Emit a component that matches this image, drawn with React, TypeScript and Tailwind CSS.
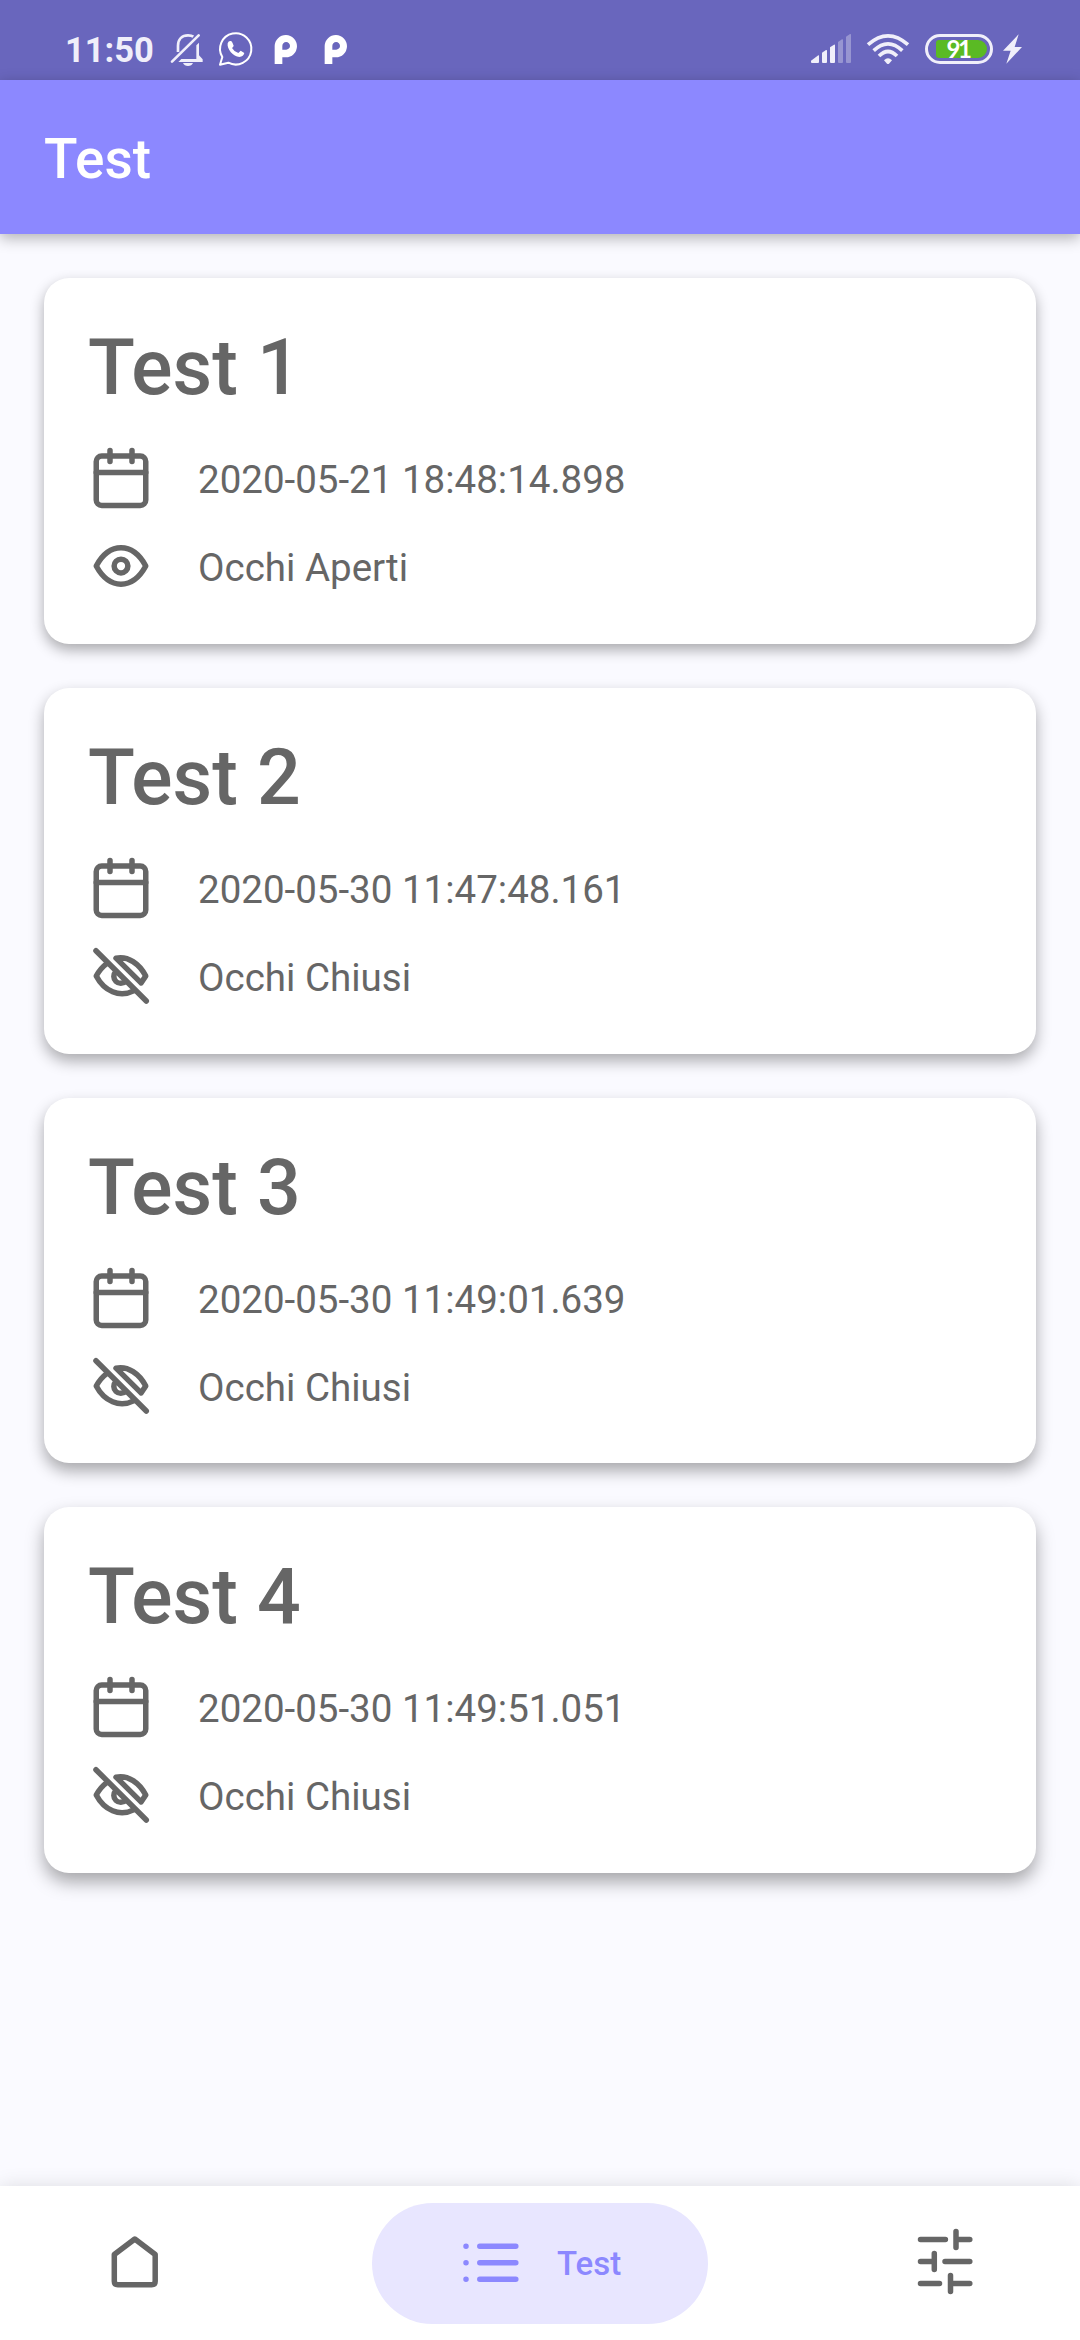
import type { ReactNode } from "react";

type TestEntry = { title: string; date: string; open: boolean; shadow: string };

const entries: TestEntry[] = [
  {
    title: "Test 1",
    date: "2020-05-21 18:48:14.898",
    open: true,
    shadow: "shadow-[0_6px_14px_rgba(0,0,0,0.32)]",
  },
  {
    title: "Test 2",
    date: "2020-05-30 11:47:48.161",
    open: false,
    shadow: "shadow-[0_7px_15px_rgba(0,0,0,0.32)]",
  },
  {
    title: "Test 3",
    date: "2020-05-30 11:49:01.639",
    open: false,
    shadow: "shadow-[0_8px_16px_rgba(0,0,0,0.33)]",
  },
  {
    title: "Test 4",
    date: "2020-05-30 11:49:51.051",
    open: false,
    shadow: "shadow-[0_9px_18px_rgba(0,0,0,0.34)]",
  },
];

function Icon({ children }: { children: ReactNode }) {
  return (
    <svg
      className="size-[66px] shrink-0 overflow-visible"
      viewBox="0 0 24 24"
      fill="none"
      stroke="currentColor"
      strokeWidth="2"
      strokeLinecap="round"
      strokeLinejoin="round"
    >
      {children}
    </svg>
  );
}

const CalendarIcon = () => (
  <Icon>
    <rect x="3" y="4" width="18" height="18" rx="2" />
    <path d="M8 2v4M16 2v4M3 10h18" />
  </Icon>
);

const EyeIcon = () => (
  <Icon>
    <path d="M3 12C7.8 3.2 16.2 3.2 21 12C16.2 20.8 7.8 20.8 3 12Z" />
    <circle cx="12" cy="12" r="2.5" />
  </Icon>
);

const EyeOffIcon = () => (
  <Icon>
    <path d="M2.9 2.8L21.2 21.1" />
    <path d="M10.2 5.5C14.6 4.6 18.7 7.6 21 12L19.3 14.5Z" />
    <path d="M6.7 7.6C5.2 8.7 4 10.2 3 12C5.9 17.5 11.4 20 16.6 17.4" />
    <path d="M10.1 10.400A2.500 2.500 0 0 0 13.700 13.900" />
  </Icon>
);

function StatusBar() {
  return (
    <div className="flex h-[80px] shrink-0 bg-[#6966bd] text-[#f0effa]">
      <div className="mt-[30px] ml-[65px] w-[102px] text-[34.5px] leading-[40px] font-bold">11:50</div>
      <svg className="h-[80px] w-[190px]" viewBox="382 0 570 240" fill="none">
        <g stroke="currentColor" strokeWidth="8" strokeLinecap="round" strokeLinejoin="round">
          <path d="M415 156V137C415 118 427 106 445 106C451 106 457 107 461 110" strokeWidth="8" strokeLinecap="butt" />
          <path d="M397 185L477 106" />
        </g>
        <path d="M478 128V166L489 178V186H416L425 177H470L470 136Z" fill="currentColor" />
        <path d="M430 189H460Q456 198 445 198Q434 198 430 189Z" fill="currentColor" />
        <path
          d="M541 194L548 171A47 47 0 1 1 566 188Z"
          stroke="#fff"
          strokeWidth="6"
          strokeLinejoin="round"
        />
        <path
          d="M564 130Q567 121 574 123Q577 124 579 130L582 137Q581 141 577 144Q583 155 596 159L603 152L614 159Q612 170 599 171C581 170 561 148 564 130Z"
          fill="#fff"
        />
        {[0, 150].map((x) => (
          <path
            key={x}
            transform={`translate(${x} 0)`}
            d="M705 192V138A33.500 33.500 0 1 1 738 172H728V192ZM728 149H739A11.500 11.500 0 1 0 728 138Z"
            fill="#fff"
            fillRule="evenodd"
          />
        ))}
      </svg>
      <svg className="ml-auto h-[80px] w-[42px]" viewBox="90 0 126 240" fill="currentColor">
        <path d="M93 182L115 166Q117 165 117 168V186Q117 189 114 189H96Q93 189 93 186Z" />
        <path d="M126 158L138 150Q141 149 141 152V186Q141 189 138 189H129Q126 189 126 186Z" />
        <path d="M150 142L162 134Q165 133 165 136V186Q165 189 162 189H153Q150 189 150 186Z" />
        <g opacity="0.34">
          <path d="M174 126L186 118Q189 117 189 120V186Q189 189 186 189H177Q174 189 174 186Z" />
          <path d="M198 110L210 102Q213 101 213 104V186Q213 189 210 189H201Q198 189 198 186Z" />
        </g>
      </svg>
      <svg className="ml-[13px] h-[80px] w-[46px]" viewBox="255 0 138 240" fill="none" stroke="currentColor" strokeWidth="11">
        <path d="M264 134Q324 81 384 134" />
        <path d="M281 152Q324 111 367 152" />
        <path d="M297 168Q324 141 351 168" />
        <path d="M312 181Q324 168 336 181L327 191Q324 193 321 191Z" fill="currentColor" stroke="none" />
      </svg>
      <div className="mt-[34px] ml-[14px] flex h-[30px] w-[68px] items-center justify-center rounded-full border-[3px] border-[#f0effa]">
        <div className="ml-[4px] flex h-[18px] w-[51px] items-center justify-center rounded-l-[3px] rounded-r-[9px] bg-[#5aba24] pr-[6px] font-['Lato'] text-[24px] leading-[18px] font-bold tracking-[-2.5px] text-white">
          91
        </div>
      </div>
      <svg className="mr-[55px] ml-[8px] h-[80px] w-[24px]" viewBox="663 0 72 240" fill="currentColor">
        <path d="M716 103L669 152H692L679 191L726 141H704Z" />
      </svg>
    </div>
  );
}

function TestCard({ entry }: { entry: TestEntry }) {
  return (
    <article className={`h-[365.75px] rounded-[25px] bg-white pl-[44px] ${entry.shadow}`}>
      <h2 className="pt-[45px] text-[77px] leading-[90px] font-medium">{entry.title}</h2>
      <div className="mt-[32px] flex flex-col gap-[22px] text-[38.5px] leading-[46px]">
        <div className="flex items-center gap-[44px]">
          <CalendarIcon />
          <span className="pt-[4px]">{entry.date}</span>
        </div>
        <div className="flex items-center gap-[44px]">
          {entry.open ? <EyeIcon /> : <EyeOffIcon />}
          <span className="pt-[4px]">{entry.open ? "Occhi Aperti" : "Occhi Chiusi"}</span>
        </div>
      </div>
    </article>
  );
}

function NavIcon({ children }: { children: ReactNode }) {
  return (
    <svg
      className="size-[66px] shrink-0 overflow-visible"
      viewBox="0 0 66 66"
      fill="none"
      stroke="currentColor"
      strokeWidth="5.5"
      strokeLinecap="round"
      strokeLinejoin="round"
    >
      {children}
    </svg>
  );
}

function BottomNav() {
  return (
    <nav className="relative flex h-[154px] shrink-0 items-center bg-white pl-[102px] shadow-[0_2px_20px_rgba(0,0,0,0.14)]">
      <NavIcon>
        <path d="M12.300 24.500L32.800 9L53.200 24.500V51.200Q53.200 54.700 49.700 54.700H15.800Q12.300 54.700 12.300 51.200Z" />
      </NavIcon>
      <div className="ml-[204px] flex h-[121px] w-[336px] items-center rounded-full bg-[#e8e6ff] pl-[86px] text-[#8c88ff]">
        <NavIcon>
          <path d="M8 16.300h.01M8 32.800h.01M8 49.300h.01M21.800 16.300h36M21.800 32.800h36M21.800 49.300h36" />
        </NavIcon>
        <span className="ml-[33px] pt-[2px] text-[33px] leading-[40px] font-medium">Test</span>
      </div>
      <div className="ml-[204px] flex">
        <NavIcon>
          <path d="M8.500 9.500H33.400M44 1.500V17.500M44 9.500H57.800M8.500 31.500H22.300M22.300 23.500V39.500M33 31.500H57.800M8.500 53.500H27.500M38.500 45.500V61.500M38.500 53.500H57.800" />
        </NavIcon>
      </div>
    </nav>
  );
}

export default function App() {
  return (
    <div className="flex h-[2340px] w-[1080px] flex-col overflow-hidden bg-[#fafaff] font-['Roboto',sans-serif] text-[#666666]">
      <StatusBar />
      <header className="relative flex h-[154px] shrink-0 items-center bg-[#8c88ff] pl-[44px] text-white shadow-[0_4px_14px_rgba(0,0,0,0.3)]">
        <h1 className="pt-[4px] text-[55px] leading-[64px] font-medium">Test</h1>
      </header>
      <main className="flex flex-1 flex-col gap-[44px] px-[44px] pt-[44px]">
        {entries.map((entry) => (
          <TestCard key={entry.title} entry={entry} />
        ))}
      </main>
      <BottomNav />
    </div>
  );
}
